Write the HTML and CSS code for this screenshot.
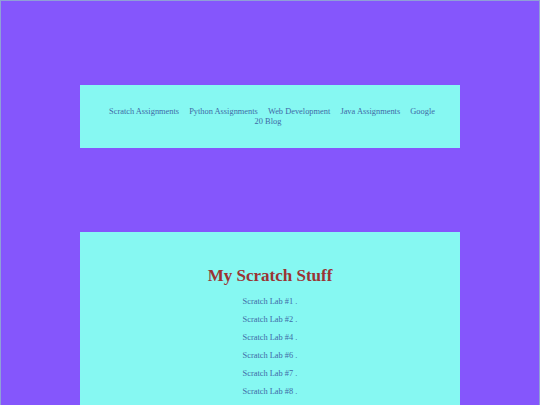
FILE: index.html
```html
<!DOCTYPE html>
<html lang="en">
<head>
  <meta charset="UTF-8">
  <title>My Scratch Stuff</title>
  <link rel="stylesheet" href="styles.css">
</head>
<body>
  <div class="nav">
    <a href="#">Scratch Assignments</a>
    <a href="#">Python Assignments</a>
    <a href="#">Web Development</a>
    <a href="#">Java Assignments</a>
    <a href="#">Google 20 Blog</a>
  </div>

  <div class="content">
    <h1>My Scratch Stuff</h1>
    <p><a href="#">Scratch Lab #1</a> .</p>
    <p><a href="#">Scratch Lab #2</a> .</p>
    <p><a href="#">Scratch Lab #4</a> .</p>
    <p><a href="#">Scratch Lab #6</a> .</p>
    <p><a href="#">Scratch Lab #7</a> .</p>
    <p><a href="#">Scratch Lab #8</a> .</p>
  </div>
</body>
</html>
```

FILE: styles.css
```css
html {
  background: #8556fc;
}
body {
  margin: 0;
  min-height: 100vh;
  border: 1px solid #8f9fd6;
  background: #8556fc;
  font-family: "Liberation Serif", serif;
  box-sizing: border-box;
}
a {
  color: #3f6aa6;
  text-decoration: none;
}
.nav {
  width: 380px;
  height: 63px;
  margin: 84px auto 0;
  padding: 22px 20px 0;
  box-sizing: border-box;
  background: #86f8f2;
  text-align: center;
  font-size: 8.4px;
  line-height: 10px;
}
.nav a {
  margin: 0 4px;
}
.content {
  width: 380px;
  margin: 84px auto 0;
  padding: 24px 20px 20px;
  box-sizing: border-box;
  background: #86f8f2;
  text-align: center;
  font-size: 8.4px;
  color: #3f6aa6;
}
h1 {
  margin: 10px 0 7px;
  font-size: 17px;
  color: #9a3434;
}
.content p {
  margin: 0;
  line-height: 18px;
}
```
